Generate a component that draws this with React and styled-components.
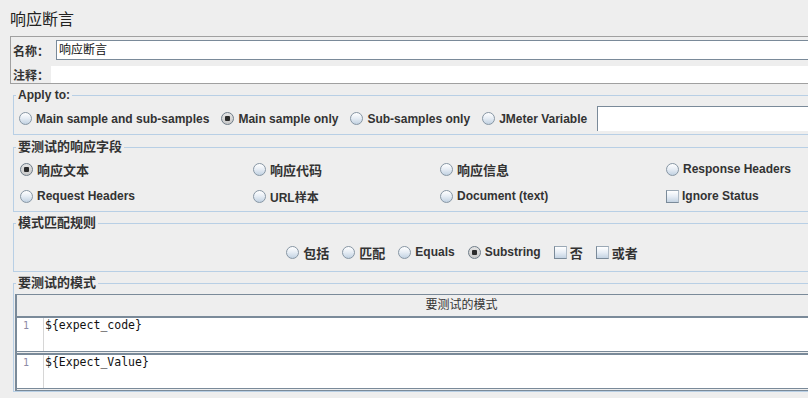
import styled, { createGlobalStyle } from "styled-components";

const GlobalStyle = createGlobalStyle`
  html, body {
    margin: 0;
    padding: 0;
    background: #eeeeee;
    overflow: hidden;
  }
  body {
    font-family: "Liberation Sans", "Noto Sans CJK SC", sans-serif;
    color: #333333;
  }
`;

const Page = styled.div`
  width: 900px;
  padding: 10px 0 0 10px;
`;

const Title = styled.h1`
  margin: 0 0 6px 0;
  font-size: 16px;
  line-height: 20px;
  font-weight: normal;
  color: #222;
`;

const NamePanel = styled.div`
  display: flex;
  flex-direction: column;
  gap: 6px;
  padding: 3px 0 0 2px;
  border: 1px solid #a0a0a0;
`;

const NameRow = styled.div`
  display: flex;
  align-items: center;
`;

const NameLabel = styled.span`
  width: ${(p) => p.$width}px;
  flex: none;
  font-size: 12px;
  font-weight: bold;
`;

const NameInput = styled.div`
  flex: 1;
  box-sizing: border-box;
  height: 20px;
  padding-left: 2px;
  border: 1px solid #7a8a99;
  background: white;
  font-size: 12px;
  line-height: 18px;
  color: #111;
`;

const CommentInput = styled.div`
  flex: 1;
  height: 17px;
  background: white;
`;

const Group = styled.fieldset`
  margin: ${(p) => p.$top}px 3px 0 3px;
  padding: 0;
  border: 1px solid #b8cfe5;
  min-width: 0;
`;

const Legend = styled.legend`
  margin-left: 2px;
  padding: 0 2px;
  font-size: ${(p) => (p.$cjk ? 13 : 12)}px;
  line-height: 14px;
  font-weight: bold;
  color: #333;
`;

const ApplyRow = styled.div`
  display: flex;
  align-items: center;
  gap: 12px;
  height: 25px;
  padding: 4px 0 3px 5px;
`;

const VarInput = styled.div`
  flex: 1;
  margin-left: -2px;
  height: 25px;
  box-sizing: border-box;
  border-top: 1px solid #7a8a99;
  border-left: 1px solid #7a8a99;
  background: white;
`;

const FieldGrid = styled.div`
  display: grid;
  grid-template-columns: 233px 187px 226px 1fr;
  grid-auto-rows: 22px;
  row-gap: 5px;
  padding: 4px 0 4px 6px;
`;

const RuleRow = styled.div`
  display: flex;
  justify-content: center;
  align-items: center;
  gap: 13px;
  height: 22px;
  padding: 11px 0 8px 4px;
`;

const Item = styled.label`
  display: flex;
  align-items: center;
  gap: ${(p) => (p.$box ? 3 : 4)}px;
  font-size: ${(p) => (p.$cjk ? 13 : 12)}px;
  font-weight: bold;
  color: #333;
  white-space: nowrap;
`;

const RadioDot = styled.span`
  position: relative;
  flex: none;
  box-sizing: border-box;
  width: 13px;
  height: 13px;
  border-radius: 50%;
  border: 1px solid ${(p) => (p.$on ? "#6e7c88" : "#8796a4")};
  background: ${(p) =>
    p.$on
      ? "linear-gradient(180deg, #e4e4e4, #c8c8c8)"
      : "linear-gradient(180deg, #ffffff 0%, #e8eef5 45%, #c2d2e2 100%)"};

  &::after {
    content: "";
    display: ${(p) => (p.$on ? "block" : "none")};
    position: absolute;
    left: 3px;
    top: 3px;
    width: 5px;
    height: 5px;
    border-radius: 1px;
    background: #2b2b2b;
  }
`;

const CheckBox = styled.span`
  flex: none;
  box-sizing: border-box;
  width: 13px;
  height: 13px;
  border: 1px solid #7a8a99;
  border-top-color: #9aa8b5;
  border-right-color: #b0bcc8;
  background: linear-gradient(180deg, #ffffff 0%, #e6edf5 50%, #c4d3e2 100%);
`;

const PatternBody = styled.div`
  padding: 4px 0 0 1px;
`;

const Table = styled.div`
  border-top: 1px solid #7a8a99;
  border-left: 2px solid #7a8a99;
`;

const TableHead = styled.div`
  height: 21px;
  line-height: 21px;
  text-align: center;
  font-size: 12px;
  color: #333;
  border-bottom: 2px solid #7a8a99;
`;

const EditorRow = styled.div`
  display: flex;
  height: 33px;
  background: white;
  border-top: ${(p) => (p.$first ? "none" : "2px solid #7a8a99")};
  border-bottom: 1px solid #7a8a99;
  margin-bottom: 1px;
`;

const Gutter = styled.div`
  width: 27px;
  flex: none;
  box-sizing: border-box;
  padding-right: 14px;
  border-right: 1px solid #d6d6d6;
  text-align: right;
  font-family: "DejaVu Sans Mono", monospace;
  font-size: 10px;
  line-height: 15px;
  color: #8c8aa6;
`;

const Code = styled.div`
  padding-left: 1px;
  font-family: "DejaVu Sans Mono", "Liberation Mono", monospace;
  font-size: 11.5px;
  line-height: 15px;
  color: #111;
`;

const TableEnd = styled.div`
  border-top: 1px solid #7a8a99;
`;

const Radio = ({ on, cjk, children }) => (
  <Item $cjk={cjk}>
    <RadioDot $on={on} />
    {children}
  </Item>
);

const Check = ({ cjk, children }) => (
  <Item $cjk={cjk} $box>
    <CheckBox />
    {children}
  </Item>
);

const fields = [
  { label: "响应文本", cjk: true, on: true },
  { label: "响应代码", cjk: true },
  { label: "响应信息", cjk: true },
  { label: "Response Headers" },
  { label: "Request Headers" },
  { label: "URL样本" },
  { label: "Document (text)" },
  { label: "Ignore Status", box: true },
];

const patterns = ["${expect_code}", "${Expect_Value}"];

export default function App() {
  return (
    <Page>
      <GlobalStyle />
      <Title>响应断言</Title>

      <NamePanel>
        <NameRow>
          <NameLabel $width={43}>名称：</NameLabel>
          <NameInput>响应断言</NameInput>
        </NameRow>
        <NameRow>
          <NameLabel $width={38}>注释：</NameLabel>
          <CommentInput />
        </NameRow>
      </NamePanel>

      <Group $top={4}>
        <Legend>Apply to:</Legend>
        <ApplyRow>
          <Radio>Main sample and sub-samples</Radio>
          <Radio on>Main sample only</Radio>
          <Radio>Sub-samples only</Radio>
          <Radio>JMeter Variable</Radio>
          <VarInput />
        </ApplyRow>
      </Group>

      <Group $top={5}>
        <Legend $cjk>要测试的响应字段</Legend>
        <FieldGrid>
          {fields.map((f) =>
            f.box ? (
              <Check key={f.label}>{f.label}</Check>
            ) : (
              <Radio key={f.label} on={f.on} cjk={f.cjk}>
                {f.label}
              </Radio>
            )
          )}
        </FieldGrid>
      </Group>

      <Group $top={4}>
        <Legend $cjk>模式匹配规则</Legend>
        <RuleRow>
          <Radio cjk>包括</Radio>
          <Radio cjk>匹配</Radio>
          <Radio>Equals</Radio>
          <Radio on>Substring</Radio>
          <Check cjk>否</Check>
          <Check cjk>或者</Check>
        </RuleRow>
      </Group>

      <Group $top={4}>
        <Legend $cjk>要测试的模式</Legend>
        <PatternBody>
          <Table>
            <TableHead>要测试的模式</TableHead>
            {patterns.map((p, i) => (
              <EditorRow key={p} $first={i === 0}>
                <Gutter>1</Gutter>
                <Code>{p}</Code>
              </EditorRow>
            ))}
            <TableEnd />
          </Table>
        </PatternBody>
      </Group>
    </Page>
  );
}
